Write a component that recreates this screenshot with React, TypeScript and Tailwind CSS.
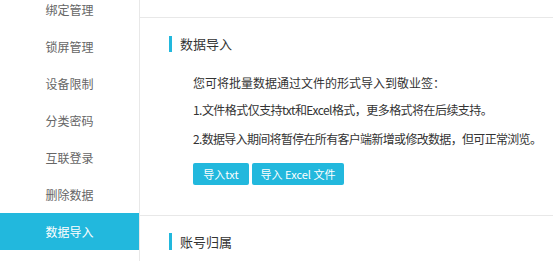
import React from "react";

const items = ["绑定管理", "锁屏管理", "设备限制", "分类密码", "互联登录", "删除数据", "数据导入"];

export default function App() {
  return (
    <div
      className="flex w-[553px] h-[261px] overflow-hidden bg-white"
      style={{ fontFamily: '"Noto Sans CJK SC", "Noto Sans", sans-serif' }}
    >
      <aside className="w-[140px] shrink-0 border-r border-[#e8e8e8]">
        <ul className="-mt-[9px]">
          {items.map((t) => {
            const active = t === "数据导入";
            return (
              <li
                key={t}
                className={
                  "h-[37px] flex items-center justify-center text-[12px] " +
                  (active ? "bg-[#22b8dd] text-white" : "text-[#666666]")
                }
              >
                {t}
              </li>
            );
          })}
        </ul>
      </aside>
      <main className="flex-1 min-w-0">
        <div className="h-[18px] border-b border-[#e8e8e8]" />
        <section className="pl-[29px] pt-[18px] pb-[30px] border-b border-[#e8e8e8]">
          <div className="flex items-center h-[16px] gap-[8px]">
            <span className="w-[3px] h-[16px] bg-[#22b8dd]" />
            <span className="text-[13px] leading-[16px] text-[#333333]">数据导入</span>
          </div>
          <div className="pl-[24px] text-[12px] leading-[16px] text-[#333333] whitespace-nowrap">
            <p className="mt-[23px]">您可将批量数据通过文件的形式导入到敬业签：</p>
            <p className="mt-[11px] tracking-[-0.55px]">1.文件格式仅支持txt和Excel格式，更多格式将在后续支持。</p>
            <p className="mt-[13px] tracking-[-0.68px]">2.数据导入期间将暂停在所有客户端新增或修改数据，但可正常浏览。</p>
            <div className="mt-[16px] flex gap-[3px]">
              <button className="w-[56px] h-[22px] bg-[#22b8dd] text-white text-[11px] leading-[22px] rounded-[2px]">
                导入txt
              </button>
              <button className="w-[92px] h-[22px] bg-[#22b8dd] text-white text-[11px] leading-[22px] rounded-[2px]">
                导入 Excel 文件
              </button>
            </div>
          </div>
        </section>
        <section className="pl-[29px] pt-[17px]">
          <div className="flex items-center h-[17px] gap-[8px]">
            <span className="w-[3px] h-[17px] bg-[#22b8dd]" />
            <span className="text-[13px] leading-[16px] text-[#333333]">账号归属</span>
          </div>
        </section>
      </main>
    </div>
  );
}
